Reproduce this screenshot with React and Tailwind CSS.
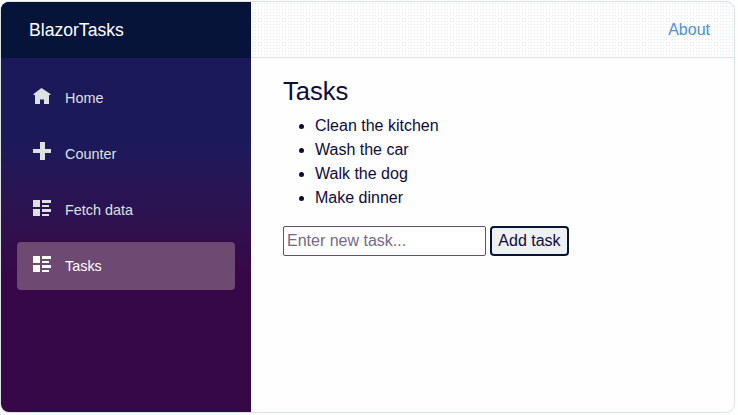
const ICONS = {
  home: 'M8.5 0L0.5 6v1h1.5v9h5v-4.5h4V16h5V7h1.5V6z',
  plus: 'M7 0v7H0v4h7v7h5v-7h6V7h-6V0z',
  list: 'M0 0h7v7H0zM9 0h9v3H9zM9 5h7v2H9zM0 9h7v7H0zM9 9h9v3H9zM9 14h7v2H9z',
};

const NAV = [
  { label: 'Home', icon: 'home' },
  { label: 'Counter', icon: 'plus', raised: true },
  { label: 'Fetch data', icon: 'list' },
  { label: 'Tasks', icon: 'list', active: true },
];

const TASKS = ['Clean the kitchen', 'Wash the car', 'Walk the dog', 'Make dinner'];

function NavItem({ label, icon, active, raised }) {
  return (
    <a
      className={`flex h-12 items-center rounded pl-4 text-[14.4px] ${
        active ? 'bg-[#6e4a72] text-white' : 'text-[#dde1e1]'
      }`}
    >
      <svg
        viewBox="0 0 18 18"
        className={`mr-3.5 size-[18px] shrink-0 fill-current ${raised ? '-mt-1.5' : '-mt-0.5'}`}
      >
        <path d={ICONS[icon]} />
      </svg>
      <span className="pt-0.5">{label}</span>
    </a>
  );
}

export default function App() {
  return (
    <div className="h-[415px] w-[738px] bg-[#fdfefe] pt-px font-['Liberation_Sans',Arial,sans-serif]">
      <div className="flex h-[412px] w-[735px] overflow-hidden rounded-[9px] border border-[#dce2e2] bg-[#fefefe]">
        <aside className="w-[250px] shrink-0 bg-linear-to-b from-[#1c195b] from-[34%] to-[#370847] to-[66%]">
          <div className="flex h-14 items-center bg-[#061439] pl-7 text-[17.6px] text-white">
            BlazorTasks
          </div>
          <nav className="flex flex-col gap-2 px-4 pt-4">
            {NAV.map((item) => (
              <NavItem key={item.label} {...item} />
            ))}
          </nav>
        </aside>
        <main className="min-w-0 flex-1 text-[#0e0b3c]">
          <header className="flex h-14 items-center justify-end border-b border-[#dce2e2] bg-[radial-gradient(circle,#e4e9e9_0.5px,transparent_0.8px)] bg-[length:3px_3px] pr-6 text-[#4f91d2]">
            About
          </header>
          <div className="px-8 pt-[18px]">
            <h1 className="mb-[7px] text-[25.6px] leading-[31px]">Tasks</h1>
            <ul className="mb-4 list-disc pl-8 leading-6">
              {TASKS.map((task) => (
                <li key={task}>{task}</li>
              ))}
            </ul>
            <div className="flex gap-1">
              <input
                placeholder="Enter new task..."
                className="h-[30px] w-[203px] rounded-[2px] border border-[#6e4a72] bg-white px-[3px] placeholder:text-[#756a82]"
              />
              <button className="h-[30px] w-[79px] rounded border-2 border-[#061439] bg-[#eef1f1] whitespace-nowrap">
                Add task
              </button>
            </div>
          </div>
        </main>
      </div>
    </div>
  );
}
